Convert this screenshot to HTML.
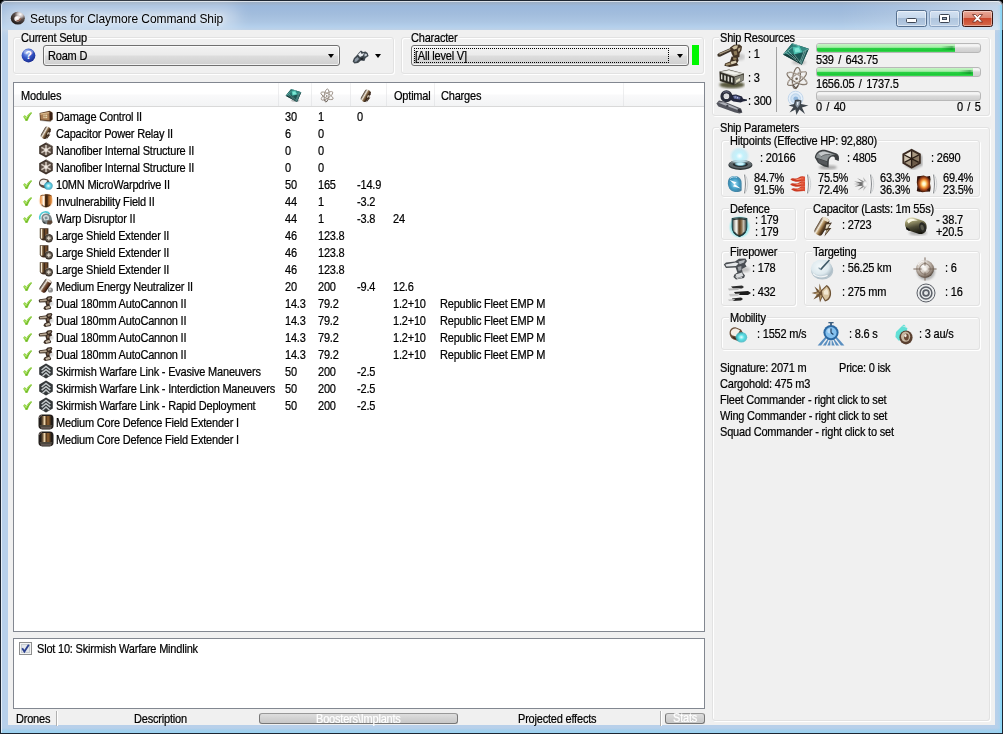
<!DOCTYPE html>
<html><head><meta charset="utf-8"><title>Setups for Claymore Command Ship</title>
<style>
html,body{margin:0;padding:0;background:#000;}
body{width:1003px;height:734px;overflow:hidden;position:relative;font-family:"Liberation Sans",sans-serif;font-size:11px;letter-spacing:-0.2px;color:#000;-webkit-text-stroke:0.2px;}
.a{position:absolute;}
.t{position:absolute;white-space:nowrap;line-height:13px;height:13px;transform:scaleY(1.08);transform-origin:0 10.5px;}
#win{left:0;top:0;width:1003px;height:734px;box-shadow:inset 0 0 0 1px #1d2531;border-radius:6px 6px 0 0;
 background:linear-gradient(180deg,#8fa3bb 0,#9db1c9 3px,#9bb8dc 6px,#a2bddd 14px,#acc6e3 22px,#b4d0ec 27px,#bfd2e7 30px,#b8d0ea 34px,#b8d0ea 728px,#a6cfec 730px,#98d2f2 733px);overflow:hidden;}
#glow{left:2px;top:6px;width:236px;height:22px;border-radius:12px;background:rgba(255,255,255,.42);filter:blur(8px);}
#rglow{left:840px;top:1px;width:163px;height:29px;background:linear-gradient(90deg,rgba(255,255,255,0),rgba(255,255,255,.18) 50%,rgba(255,255,255,.42));}
#redge{left:997px;top:5px;width:5px;height:728px;background:linear-gradient(90deg,rgba(140,214,246,0) 0,rgba(140,214,246,.25) 50%,rgba(140,214,246,1) 75%,rgba(140,214,246,1) 100%);}
#hl{left:1px;top:1px;width:1001px;height:732px;border:1px solid rgba(255,255,255,.65);border-right-color:transparent;border-bottom-color:transparent;border-radius:5px 5px 0 0;box-sizing:border-box;}
#client{left:8px;top:30px;width:987px;height:695px;background:#f0f0f0;}
#title{-webkit-text-stroke:0;left:30px;top:12px;font-size:12px;letter-spacing:-0.07px;line-height:15px;height:15px;color:#000;text-shadow:0 0 5px rgba(255,255,255,.9),0 0 9px rgba(255,255,255,.8);}
.gb{position:absolute;border:1px solid #e2e2e2;border-radius:3px;box-shadow:inset 1px 1px 0 #fff,1px 1px 0 #fff;box-sizing:border-box;}
.gl{position:absolute;background:#f0f0f0;padding:0 1px;line-height:13px;height:13px;white-space:nowrap;}
.gl span{display:inline-block;transform:scaleY(1.08);transform-origin:0 10.5px;}
.combo{position:absolute;box-sizing:border-box;border:1px solid #707070;border-radius:3px;background:linear-gradient(180deg,#f2f2f2 0,#ebebeb 48%,#dddddd 52%,#cfcfcf 100%);box-shadow:inset 0 0 0 1px rgba(255,255,255,.7);}
.arr{position:absolute;width:0;height:0;border-left:3.5px solid transparent;border-right:3.5px solid transparent;border-top:4px solid #000;}
#list{left:5px;top:52px;width:692px;height:550px;background:#fff;border:1px solid #828790;box-sizing:border-box;}
#hdr{left:0;top:0;width:690px;height:24px;background:linear-gradient(180deg,#ffffff 0,#ffffff 48%,#f9f9fa 52%,#f3f4f5 100%);border-bottom:1px solid #d9d9d9;box-sizing:border-box;}
.sep{position:absolute;top:0;width:1px;height:23px;background:linear-gradient(180deg,#f2f2f3,#e6e7e9);}
#box2{left:5px;top:608px;width:692px;height:71px;background:#fff;border:1px solid #828790;box-sizing:border-box;}
.pb{position:absolute;box-sizing:border-box;height:10px;border:1px solid #b8b8b8;border-radius:3px;background:linear-gradient(180deg,#f0f0f0 0,#f6f6f6 25%,#dadada 50%,#cfcfcf 100%);overflow:hidden;}
.pf{position:absolute;left:0;top:0;height:100%;background:linear-gradient(90deg,rgba(0,110,25,0) calc(100% - 14px),rgba(0,110,25,.45) calc(100% - 3px),rgba(0,110,25,.1) 100%) 0 45%/100% 55% no-repeat,linear-gradient(180deg,#c6f6c6 0,#a6eea8 42%,#2bd045 52%,#1cc936 85%,#48d85e 100%);}
</style></head><body>
<div id="win" class="a">
<div id="glow" class="a"></div><div id="rglow" class="a"></div><div id="redge" class="a"></div><div id="hl" class="a"></div>

<svg class="a" style="left:10px;top:10px" width="16" height="16" viewBox="0 0 16 16"><defs><radialGradient id="gApp" cx=".68" cy=".2" r=".8"><stop offset="0" stop-color="#ffffff"/><stop offset=".25" stop-color="#c9c0c0"/><stop offset=".5" stop-color="#5a4e4a"/><stop offset="1" stop-color="#241e1c"/></radialGradient></defs>
<ellipse cx="7.8" cy="8.2" rx="7" ry="6.4" fill="url(#gApp)"/><ellipse cx="7.4" cy="8.8" rx="3.1" ry="2.7" fill="#f1e8e8"/><path d="M6.4 11.4 C8.6 11.8 10.8 10.6 11.4 8.4 L9.8 8 C9.4 9.6 8 10.4 6.4 10.2 Z" fill="#8e5e4c"/><ellipse cx="6.8" cy="8" rx="1.3" ry="1" fill="#fff"/></svg>
<div id="title" class="t">Setups for Claymore Command Ship</div>
<div class="a" style="left:896px;top:10px;width:31px;height:17px;box-sizing:border-box;border:1px solid #556f8e;border-radius:2.5px;background:linear-gradient(180deg,#d6e4f4 0,#c6d8ec 46%,#a6bdd8 50%,#b6cbe2 100%);box-shadow:inset 0 0 0 1px rgba(255,255,255,.5)"></div>
<div class="a" style="left:906px;top:18px;width:11px;height:5px;box-sizing:border-box;background:#fff;border:1px solid #3d4654;border-radius:1.5px"></div>
<div class="a" style="left:929px;top:10px;width:31px;height:17px;box-sizing:border-box;border:1px solid #8aa2c0;border-radius:2.5px;background:linear-gradient(180deg,#d3e1f2 0,#c6d7ea 46%,#b0c6de 50%,#bdd0e6 100%);box-shadow:inset 0 0 0 1px rgba(255,255,255,.4)"></div>
<div class="a" style="left:939px;top:14px;width:11px;height:9px;box-sizing:border-box;background:#fff;border:1px solid #3d4654;border-radius:1.5px"></div>
<div class="a" style="left:942px;top:17px;width:5px;height:3px;box-sizing:border-box;background:#9aa6b8;border:1px solid #3d4654"></div>
<div class="a" style="left:962px;top:10px;width:31px;height:17px;box-sizing:border-box;border:1px solid #3c1612;border-radius:2.5px;background:linear-gradient(180deg,#eaa999 0,#dc8672 46%,#cb472c 50%,#d46a4c 100%);box-shadow:inset 0 0 0 1px rgba(255,255,255,.4)"></div>
<svg class="a" style="left:972px;top:14px" width="11" height="8.6" viewBox="0 0 13 10" preserveAspectRatio="none"><path d="M.6 .6 L4.2 .6 L6.5 3 L8.8 .6 L12.4 .6 L8.6 5 L12.4 9.4 L8.8 9.4 L6.5 7 L4.2 9.4 L.6 9.4 L4.4 5 Z" fill="#fff" stroke="#6a241a" stroke-width=".9"/></svg>

<div id="client" class="a">
<div class="gb" style="left:5px;top:7px;width:381px;height:37px"></div>
<div class="gl" style="left:12px;top:2px"><span>Current Setup</span></div>
<div class="gb" style="left:393px;top:7px;width:303px;height:37px"></div>
<div class="gl" style="left:402px;top:2px"><span>Character</span></div>
<div class="gb" style="left:704px;top:7px;width:278px;height:79px"></div>
<div class="gl" style="left:711px;top:2px"><span>Ship Resources</span></div>
<div class="gb" style="left:704px;top:97px;width:278px;height:594px"></div>
<div class="gl" style="left:711px;top:92px"><span>Ship Parameters</span></div>
<svg class="a" style="left:13px;top:18px" width="15" height="15" viewBox="0 0 17 17"><defs><radialGradient id="gHelp" cx=".4" cy=".3" r=".75"><stop offset="0" stop-color="#9db4f2"/><stop offset=".5" stop-color="#3558c8"/><stop offset="1" stop-color="#16268a"/></radialGradient></defs>
<circle cx="8.5" cy="8.5" r="7.8" fill="url(#gHelp)"/><ellipse cx="8.5" cy="4.6" rx="5.5" ry="3" fill="#fff" opacity=".28"/>
<text x="8.5" y="13" text-anchor="middle" font-family="Liberation Sans" font-weight="bold" font-size="12.5" fill="#fff" letter-spacing="0">?</text></svg>
<div class="combo" style="left:35px;top:15px;width:297px;height:21px"></div>
<div class="t " style="left:40px;top:20px;">Roam D</div>
<div class="arr" style="left:320px;top:24px"></div>
<svg class="a" style="left:344px;top:19px" width="18" height="16" viewBox="0 0 18 16"><defs><filter id="u1"><feGaussianBlur stdDeviation=".35"/></filter></defs><g filter="url(#u1)"><path d="M.6 12.6 L2 9 L5 6 L7 3.4 L9 1.4 L11 3 L13.6 2.4 L15.6 4 L16.6 7 L13.6 9 L12.4 12 L9 11.6 L6 14 L2.4 14.6 Z" fill="#3e464e"/><path d="M6 5.4 L8.6 3 L9.6 5 L12 4 L11 6.6 L8 8 Z" fill="#e8ecf0"/><path d="M12.6 4.4 L15 5 L14.6 7 L12.4 7.6 Z" fill="#c4ccd4"/><path d="M3 10 L5.6 8 L7 10 L4.6 12.6 L2.4 13 Z" fill="#8c98a4"/><path d="M8 9.6 L11 8.6 L11.4 10.6 L9 11 Z" fill="#1a2026"/></g></svg>
<div class="arr" style="left:367px;top:24px"></div>
<div class="combo" style="left:403px;top:15px;width:278px;height:21px"></div>
<div class="a" style="left:406px;top:18px;width:255px;height:15px;border:1px dotted #000;box-sizing:border-box"></div>
<div class="t " style="left:407px;top:20px;">[All level V]</div>
<div class="arr" style="left:669px;top:24px"></div>
<div class="a" style="left:684px;top:15px;width:7px;height:20px;background:#00f800"></div>
<div id="list" class="a"><div id="hdr" class="a">
<div class="sep" style="left:264px"></div>
<div class="sep" style="left:297px"></div>
<div class="sep" style="left:336px"></div>
<div class="sep" style="left:372px"></div>
<div class="sep" style="left:420px"></div>
<div class="sep" style="left:609px"></div>
<div class="t " style="left:7px;top:7px;">Modules</div>
<svg class="a" style="left:271px;top:5px" width="17" height="15" viewBox="0 0 28 24"><defs><filter id="b6"><feGaussianBlur stdDeviation=".35"/></filter><filter id="b6s"><feGaussianBlur stdDeviation="1"/></filter></defs>
<ellipse cx="17" cy="20.4" rx="7" ry="2.2" fill="#9a9a9a" opacity=".6" filter="url(#b6s)"/>
<g filter="url(#b6)"><path d="M1 12.4 L10.2 1.2 L26.8 6.8 L19.8 22.8 Z" fill="#143c3c"/>
<path d="M1 12.4 L10.2 1.2 L10.4 5.2 L12 12.4 Z" fill="#277670"/>
<path d="M10.2 1.2 L26.8 6.8 L20.8 10.2 L17.4 3.8 L10.4 5.2 Z" fill="#348a82"/>
<path d="M26.8 6.8 L19.8 22.8 L12 12.4 L20.8 10.2 Z" fill="#1d5452"/>
<path d="M1 12.4 L12 12.4 L19.8 22.8 Z" fill="#163f3e"/>
<path d="M10.4 5.2 L17.4 3.8 L20.8 10.2 L12 12.4 Z" fill="#4cc0b0"/><path d="M12.4 6.4 L16.6 5.6 L18.6 9.4 L13.4 10.6 Z" fill="#7ee6d4"/>
<g stroke="#bfeee8" stroke-width=".6" opacity=".8"><path d="M10.4 5.2 L1.4 12.2 M17.4 3.8 L10.4 1.6 M20.8 10.2 L26.4 7 M12 12.4 L19.6 22.2 M6 9 L14 17 M4 10.6 L16 19.6 M22 9.8 L18 20 M24 8.6 L19 21.4"/></g></g></svg>
<svg class="a" style="left:305px;top:5px" width="16" height="15" viewBox="0 0 26 24"><defs><filter id="b7"><feGaussianBlur stdDeviation=".3"/></filter></defs><g filter="url(#b7)"><g fill="none" stroke="#7c7066" stroke-width="1.25"><ellipse cx="13" cy="12.5" rx="11" ry="3.9" transform="rotate(28 13 12.5)"/><ellipse cx="13" cy="12.5" rx="11" ry="3.9" transform="rotate(-34 13 12.5)"/><ellipse cx="12.4" cy="12" rx="3.8" ry="10.6" transform="rotate(8 12.4 12)"/></g><g fill="none" stroke="#e4dcd2" stroke-width=".55"><ellipse cx="13.3" cy="12" rx="10.6" ry="3.5" transform="rotate(28 13.3 12)"/><ellipse cx="12.8" cy="12" rx="10.6" ry="3.5" transform="rotate(-34 12.8 12)"/></g><circle cx="12.6" cy="12.8" r="1.3" fill="#6a5e54"/><path d="M9 19 L12 22.4 L14 19.6" stroke="#5e5248" stroke-width="1.2" fill="none"/></g></svg>
<svg class="a" style="left:344px;top:5px" width="16" height="16" viewBox="0 0 16 16"><defs><linearGradient id="gC16" x1="0" x2="1"><stop offset="0" stop-color="#3a2a1c"/><stop offset=".3" stop-color="#f2eade"/><stop offset=".5" stop-color="#8a6e4c"/><stop offset=".75" stop-color="#4a3422"/><stop offset="1" stop-color="#241810"/></linearGradient><filter id="m2"><feGaussianBlur stdDeviation=".3"/></filter></defs><g filter="url(#m2)"><g transform="rotate(30 8 8)"><rect x="4.4" y="1.6" width="6.6" height="12.6" rx="2.4" fill="url(#gC16)"/></g><path d="M9 7 L13 6 L10.6 9.4 L12.4 9.4 L8.4 14.4 L9.6 10.6 L7.8 10.8 Z" fill="#3e2c1e"/><path d="M9.6 7.6 L11.8 7 L10 9.6 L9 9.8 Z" fill="#e4d8c4"/></g></svg>
<div class="t " style="left:380px;top:7px;">Optimal</div>
<div class="t " style="left:427px;top:7px;">Charges</div>
</div>
<svg class="a" style="left:9px;top:29px" width="9" height="9" viewBox="0 0 9 9"><path d="M0.1 4.7 L1.9 3.1 L3.3 5.1 C4.4 3 5.9 1.2 8.3 0 L9 1.2 C7 3.2 5.6 5.8 4.7 8.8 L2.6 9 C2 7.4 1.2 5.9 0.1 4.7 Z" fill="#84cb34"/><path d="M1.2 4.4 L3.3 6.6 C4.4 4.4 5.6 2.6 7.8 1" stroke="#cdf590" stroke-width="1" fill="none" opacity=".9"/><path d="M3.2 8.6 C3.9 6.2 5.2 3.6 8 1.4" stroke="#4a9410" stroke-width=".7" fill="none" opacity=".6"/></svg>
<svg class="a" style="left:24px;top:25px" width="16" height="16" viewBox="0 0 16 16"><defs><filter id="m1"><feGaussianBlur stdDeviation=".3"/></filter></defs><g filter="url(#m1)"><path d="M1.6 5 L11.6 2.8 L14.4 4.6 L14.6 11.6 L12.4 13.6 L2 12.4 Z" fill="#5c3e26"/><path d="M2.4 5.6 L11.4 4 L11.6 12.2 L2.8 11.4 Z" fill="#a87c52"/><path d="M2.4 5.6 L11.4 4 L11.4 5.2 L2.4 6.8 Z" fill="#d8b88c"/><rect x="5.4" y="6.6" width="3.8" height="3.6" fill="#ecd8b0"/><path d="M7 6.6 V10.2 M5.4 8.4 H9.2" stroke="#9a7448" stroke-width=".6"/><path d="M11.6 4 L14.4 4.8 L14.4 11.4 L11.8 12.2 Z" fill="#3a2416"/><path d="M3 12.6 L12 13.8 L14.6 11.8" stroke="#9c9c9c" stroke-width=".8" fill="none" opacity=".6"/></g></svg>
<div class="t " style="left:42px;top:28px;">Damage Control II</div>
<div class="t " style="left:271px;top:28px;">30</div>
<div class="t " style="left:304px;top:28px;">1</div>
<div class="t " style="left:343px;top:28px;">0</div>
<svg class="a" style="left:24px;top:42px" width="16" height="16" viewBox="0 0 16 16"><defs><linearGradient id="gC17" x1="0" x2="1"><stop offset="0" stop-color="#3a2a1c"/><stop offset=".3" stop-color="#f2eade"/><stop offset=".5" stop-color="#8a6e4c"/><stop offset=".75" stop-color="#4a3422"/><stop offset="1" stop-color="#241810"/></linearGradient><filter id="m3"><feGaussianBlur stdDeviation=".3"/></filter></defs><g filter="url(#m3)"><g transform="rotate(30 8 8)"><rect x="4.4" y="1.6" width="6.6" height="12.6" rx="2.4" fill="url(#gC17)"/></g><path d="M9 7 L13 6 L10.6 9.4 L12.4 9.4 L8.4 14.4 L9.6 10.6 L7.8 10.8 Z" fill="#3e2c1e"/><path d="M9.6 7.6 L11.8 7 L10 9.6 L9 9.8 Z" fill="#e4d8c4"/></g></svg>
<div class="t " style="left:42px;top:45px;">Capacitor Power Relay II</div>
<div class="t " style="left:271px;top:45px;">6</div>
<div class="t " style="left:304px;top:45px;">0</div>
<svg class="a" style="left:24px;top:59px" width="16" height="16" viewBox="0 0 16 16"><defs><filter id="m4"><feGaussianBlur stdDeviation=".4"/></filter></defs><g filter="url(#m4)"><path d="M8 .6 L14.8 4.2 L14.8 11.8 L8 15.4 L1.2 11.8 L1.2 4.2 Z" fill="#3e322a"/><path d="M8 2.2 L13.4 5 L13.4 11 L8 13.8 L2.6 11 L2.6 5 Z" fill="#64564c"/><g stroke="#d4cac0" stroke-width="1.5"><path d="M8 3 V13 M3.4 5.4 L12.6 10.6 M12.6 5.4 L3.4 10.6"/></g><circle cx="8" cy="8" r="1.7" fill="#f4ece4"/><path d="M8 .8 L14.6 4.4 L14.6 7" stroke="#8e8278" stroke-width=".8" fill="none"/></g></svg>
<div class="t " style="left:42px;top:62px;">Nanofiber Internal Structure II</div>
<div class="t " style="left:271px;top:62px;">0</div>
<div class="t " style="left:304px;top:62px;">0</div>
<svg class="a" style="left:24px;top:76px" width="16" height="16" viewBox="0 0 16 16"><defs><filter id="m4"><feGaussianBlur stdDeviation=".4"/></filter></defs><g filter="url(#m4)"><path d="M8 .6 L14.8 4.2 L14.8 11.8 L8 15.4 L1.2 11.8 L1.2 4.2 Z" fill="#3e322a"/><path d="M8 2.2 L13.4 5 L13.4 11 L8 13.8 L2.6 11 L2.6 5 Z" fill="#64564c"/><g stroke="#d4cac0" stroke-width="1.5"><path d="M8 3 V13 M3.4 5.4 L12.6 10.6 M12.6 5.4 L3.4 10.6"/></g><circle cx="8" cy="8" r="1.7" fill="#f4ece4"/><path d="M8 .8 L14.6 4.4 L14.6 7" stroke="#8e8278" stroke-width=".8" fill="none"/></g></svg>
<div class="t " style="left:42px;top:79px;">Nanofiber Internal Structure II</div>
<div class="t " style="left:271px;top:79px;">0</div>
<div class="t " style="left:304px;top:79px;">0</div>
<svg class="a" style="left:9px;top:97px" width="9" height="9" viewBox="0 0 9 9"><path d="M0.1 4.7 L1.9 3.1 L3.3 5.1 C4.4 3 5.9 1.2 8.3 0 L9 1.2 C7 3.2 5.6 5.8 4.7 8.8 L2.6 9 C2 7.4 1.2 5.9 0.1 4.7 Z" fill="#84cb34"/><path d="M1.2 4.4 L3.3 6.6 C4.4 4.4 5.6 2.6 7.8 1" stroke="#cdf590" stroke-width="1" fill="none" opacity=".9"/><path d="M3.2 8.6 C3.9 6.2 5.2 3.6 8 1.4" stroke="#4a9410" stroke-width=".7" fill="none" opacity=".6"/></svg>
<svg class="a" style="left:24px;top:93px" width="16" height="16" viewBox="0 0 16 16"><defs><radialGradient id="gMwd" cx=".5" cy=".5" r=".55"><stop offset="0" stop-color="#e8ffff"/><stop offset=".5" stop-color="#5cd0e4"/><stop offset="1" stop-color="#2a88a8" stop-opacity=".8"/></radialGradient><filter id="m5"><feGaussianBlur stdDeviation=".35"/></filter></defs><g filter="url(#m5)"><path d="M1 6.4 C1.4 4 3.6 2.4 6 2.6 L10 3.6 L11.6 6 L7.6 12.4 L4 11.4 C1.8 10.4 .6 8.6 1 6.4 Z" fill="#5a4a40"/><path d="M2 6.4 C2.4 4.6 4 3.6 6 3.8 L9.4 4.6 L6.4 9.4 L3.6 8.8 C2.4 8.2 1.8 7.4 2 6.4 Z" fill="#f2f0ee"/><ellipse cx="10.4" cy="9.8" rx="4.4" ry="4" fill="url(#gMwd)"/></g></svg>
<div class="t " style="left:42px;top:96px;">10MN MicroWarpdrive II</div>
<div class="t " style="left:271px;top:96px;">50</div>
<div class="t " style="left:304px;top:96px;">165</div>
<div class="t " style="left:343px;top:96px;">-14.9</div>
<svg class="a" style="left:9px;top:114px" width="9" height="9" viewBox="0 0 9 9"><path d="M0.1 4.7 L1.9 3.1 L3.3 5.1 C4.4 3 5.9 1.2 8.3 0 L9 1.2 C7 3.2 5.6 5.8 4.7 8.8 L2.6 9 C2 7.4 1.2 5.9 0.1 4.7 Z" fill="#84cb34"/><path d="M1.2 4.4 L3.3 6.6 C4.4 4.4 5.6 2.6 7.8 1" stroke="#cdf590" stroke-width="1" fill="none" opacity=".9"/><path d="M3.2 8.6 C3.9 6.2 5.2 3.6 8 1.4" stroke="#4a9410" stroke-width=".7" fill="none" opacity=".6"/></svg>
<svg class="a" style="left:24px;top:110px" width="16" height="16" viewBox="0 0 16 16"><defs><linearGradient id="gInv" x1="0" x2="1"><stop offset="0" stop-color="#e88a3c"/><stop offset=".16" stop-color="#f6c08c"/><stop offset=".28" stop-color="#fff8ee"/><stop offset=".38" stop-color="#e8c29a"/><stop offset=".46" stop-color="#46280f"/><stop offset=".6" stop-color="#3a2210"/><stop offset=".7" stop-color="#8a5424"/><stop offset=".86" stop-color="#c87a34"/><stop offset="1" stop-color="#e08a3c"/></linearGradient><radialGradient id="gInvH" cx=".5" cy=".5" r=".5"><stop offset=".6" stop-color="#f6a050" stop-opacity=".8"/><stop offset="1" stop-color="#f6a050" stop-opacity="0"/></radialGradient><filter id="m6"><feGaussianBlur stdDeviation=".3"/></filter></defs><ellipse cx="8" cy="7.8" rx="7.8" ry="7.6" fill="url(#gInvH)"/><g filter="url(#m6)"><path d="M2.2 3 C2.6 1.6 5 1.2 8 1.2 C11 1.2 13.4 1.6 13.8 3 V8.6 C13.8 11.8 11.2 13.6 8 14.2 C4.8 13.6 2.2 11.8 2.2 8.6 Z" fill="url(#gInv)"/><path d="M3.6 11.6 C4.8 13 6.4 13.7 8 13.9 C9.6 13.7 11.2 13 12.4 11.6" stroke="#2a180c" stroke-width="1.2" fill="none" opacity=".6"/><path d="M2.6 2.8 C4 2 12 2 13.4 2.8" stroke="#5a3216" stroke-width=".9" fill="none" opacity=".8"/></g></svg>
<div class="t " style="left:42px;top:113px;">Invulnerability Field II</div>
<div class="t " style="left:271px;top:113px;">44</div>
<div class="t " style="left:304px;top:113px;">1</div>
<div class="t " style="left:343px;top:113px;">-3.2</div>
<svg class="a" style="left:9px;top:131px" width="9" height="9" viewBox="0 0 9 9"><path d="M0.1 4.7 L1.9 3.1 L3.3 5.1 C4.4 3 5.9 1.2 8.3 0 L9 1.2 C7 3.2 5.6 5.8 4.7 8.8 L2.6 9 C2 7.4 1.2 5.9 0.1 4.7 Z" fill="#84cb34"/><path d="M1.2 4.4 L3.3 6.6 C4.4 4.4 5.6 2.6 7.8 1" stroke="#cdf590" stroke-width="1" fill="none" opacity=".9"/><path d="M3.2 8.6 C3.9 6.2 5.2 3.6 8 1.4" stroke="#4a9410" stroke-width=".7" fill="none" opacity=".6"/></svg>
<svg class="a" style="left:24px;top:127px" width="16" height="16" viewBox="0 0 16 16"><defs><filter id="m7"><feGaussianBlur stdDeviation=".4"/></filter></defs><g filter="url(#m7)"><path d="M2 9.4 C1 6 3 2.6 6.4 2 C8.4 1.6 10.4 2.4 11.6 4" stroke="#52ccd6" stroke-width="1.7" fill="none"/><path d="M3.4 8 C3.4 5.4 5.4 3.6 8 3.6 C11 3.6 13.4 5.6 13.8 8.6 L14.4 12.6 L12.4 14.6 L7 14 C4.6 13 3.4 10.6 3.4 8 Z" fill="#7c8688"/><path d="M5 7.6 C5.2 6 6.4 5 8 5 C9.6 5 10.8 6 11 7.4 L10.6 10 L6.4 10.4 Z" fill="#d8e0e2"/><path d="M6.6 6.8 L9.4 6.6 L9.6 9 L7 9.4 Z" fill="#7e9296"/><path d="M9.6 10.6 L14 10.6 L14.4 12.8 L12.4 14.6 L9 14.2 Z" fill="#5c4434"/><path d="M4.4 11 L7.6 12.4 L7.4 14 L5 13 Z" fill="#3e4446"/></g></svg>
<div class="t " style="left:42px;top:130px;">Warp Disruptor II</div>
<div class="t " style="left:271px;top:130px;">44</div>
<div class="t " style="left:304px;top:130px;">1</div>
<div class="t " style="left:343px;top:130px;">-3.8</div>
<div class="t " style="left:379px;top:130px;">24</div>
<svg class="a" style="left:24px;top:144px" width="16" height="16" viewBox="0 0 16 16"><defs><filter id="m11"><feGaussianBlur stdDeviation=".3"/></filter></defs><g filter="url(#m11)"><path d="M1.8 1.2 H10.4 V10.2 C10.4 12 8.6 13.4 6.1 13.4 C3.6 13.4 1.8 12 1.8 10.2 Z" fill="#3e2a1a"/><rect x="2.7" y="1.8" width="1.7" height="9.8" fill="#f6ead4"/><rect x="4.4" y="1.8" width="1" height="9.6" fill="#9c7a50"/><rect x="7" y="2" width="2.2" height="8.4" fill="#6e4a2a"/><circle cx="10.8" cy="11.2" r="4.2" fill="#3a322c"/><circle cx="10.8" cy="11.2" r="3" fill="#6a6056"/><path d="M10.8 9.2 V13.2 M8.8 11.2 H12.8" stroke="#e4dcd0" stroke-width="1.2"/><path d="M7.6 8.6 C8.4 7.6 9.8 7 11 7.2" stroke="#a89e92" stroke-width=".7" fill="none"/></g></svg>
<div class="t " style="left:42px;top:147px;">Large Shield Extender II</div>
<div class="t " style="left:271px;top:147px;">46</div>
<div class="t " style="left:304px;top:147px;">123.8</div>
<svg class="a" style="left:24px;top:161px" width="16" height="16" viewBox="0 0 16 16"><defs><filter id="m11"><feGaussianBlur stdDeviation=".3"/></filter></defs><g filter="url(#m11)"><path d="M1.8 1.2 H10.4 V10.2 C10.4 12 8.6 13.4 6.1 13.4 C3.6 13.4 1.8 12 1.8 10.2 Z" fill="#3e2a1a"/><rect x="2.7" y="1.8" width="1.7" height="9.8" fill="#f6ead4"/><rect x="4.4" y="1.8" width="1" height="9.6" fill="#9c7a50"/><rect x="7" y="2" width="2.2" height="8.4" fill="#6e4a2a"/><circle cx="10.8" cy="11.2" r="4.2" fill="#3a322c"/><circle cx="10.8" cy="11.2" r="3" fill="#6a6056"/><path d="M10.8 9.2 V13.2 M8.8 11.2 H12.8" stroke="#e4dcd0" stroke-width="1.2"/><path d="M7.6 8.6 C8.4 7.6 9.8 7 11 7.2" stroke="#a89e92" stroke-width=".7" fill="none"/></g></svg>
<div class="t " style="left:42px;top:164px;">Large Shield Extender II</div>
<div class="t " style="left:271px;top:164px;">46</div>
<div class="t " style="left:304px;top:164px;">123.8</div>
<svg class="a" style="left:24px;top:178px" width="16" height="16" viewBox="0 0 16 16"><defs><filter id="m11"><feGaussianBlur stdDeviation=".3"/></filter></defs><g filter="url(#m11)"><path d="M1.8 1.2 H10.4 V10.2 C10.4 12 8.6 13.4 6.1 13.4 C3.6 13.4 1.8 12 1.8 10.2 Z" fill="#3e2a1a"/><rect x="2.7" y="1.8" width="1.7" height="9.8" fill="#f6ead4"/><rect x="4.4" y="1.8" width="1" height="9.6" fill="#9c7a50"/><rect x="7" y="2" width="2.2" height="8.4" fill="#6e4a2a"/><circle cx="10.8" cy="11.2" r="4.2" fill="#3a322c"/><circle cx="10.8" cy="11.2" r="3" fill="#6a6056"/><path d="M10.8 9.2 V13.2 M8.8 11.2 H12.8" stroke="#e4dcd0" stroke-width="1.2"/><path d="M7.6 8.6 C8.4 7.6 9.8 7 11 7.2" stroke="#a89e92" stroke-width=".7" fill="none"/></g></svg>
<div class="t " style="left:42px;top:181px;">Large Shield Extender II</div>
<div class="t " style="left:271px;top:181px;">46</div>
<div class="t " style="left:304px;top:181px;">123.8</div>
<svg class="a" style="left:9px;top:199px" width="9" height="9" viewBox="0 0 9 9"><path d="M0.1 4.7 L1.9 3.1 L3.3 5.1 C4.4 3 5.9 1.2 8.3 0 L9 1.2 C7 3.2 5.6 5.8 4.7 8.8 L2.6 9 C2 7.4 1.2 5.9 0.1 4.7 Z" fill="#84cb34"/><path d="M1.2 4.4 L3.3 6.6 C4.4 4.4 5.6 2.6 7.8 1" stroke="#cdf590" stroke-width="1" fill="none" opacity=".9"/><path d="M3.2 8.6 C3.9 6.2 5.2 3.6 8 1.4" stroke="#4a9410" stroke-width=".7" fill="none" opacity=".6"/></svg>
<svg class="a" style="left:24px;top:195px" width="16" height="16" viewBox="0 0 16 16"><defs><linearGradient id="gNt" x1="0" x2="1"><stop offset="0" stop-color="#2e2018"/><stop offset=".3" stop-color="#efe6dc"/><stop offset=".5" stop-color="#7a5a42"/><stop offset=".75" stop-color="#5a2e1a"/><stop offset="1" stop-color="#20140c"/></linearGradient><filter id="m10"><feGaussianBlur stdDeviation=".35"/></filter></defs><g filter="url(#m10)"><g transform="rotate(34 7.5 8)"><rect x="3.6" y=".8" width="7.4" height="14" rx="2.6" fill="url(#gNt)"/><ellipse cx="7.3" cy="2" rx="2.8" ry="1.1" fill="#f4eee6"/></g><circle cx="12.4" cy="12" r="2.6" fill="#8e8e8e"/><circle cx="11.8" cy="11.4" r="1.1" fill="#d4d4d4"/></g></svg>
<div class="t " style="left:42px;top:198px;">Medium Energy Neutralizer II</div>
<div class="t " style="left:271px;top:198px;">20</div>
<div class="t " style="left:304px;top:198px;">200</div>
<div class="t " style="left:343px;top:198px;">-9.4</div>
<div class="t " style="left:379px;top:198px;">12.6</div>
<svg class="a" style="left:9px;top:216px" width="9" height="9" viewBox="0 0 9 9"><path d="M0.1 4.7 L1.9 3.1 L3.3 5.1 C4.4 3 5.9 1.2 8.3 0 L9 1.2 C7 3.2 5.6 5.8 4.7 8.8 L2.6 9 C2 7.4 1.2 5.9 0.1 4.7 Z" fill="#84cb34"/><path d="M1.2 4.4 L3.3 6.6 C4.4 4.4 5.6 2.6 7.8 1" stroke="#cdf590" stroke-width="1" fill="none" opacity=".9"/><path d="M3.2 8.6 C3.9 6.2 5.2 3.6 8 1.4" stroke="#4a9410" stroke-width=".7" fill="none" opacity=".6"/></svg>
<svg class="a" style="left:24px;top:212px" width="16" height="16" viewBox="0 0 16 16"><defs><filter id="m8"><feGaussianBlur stdDeviation=".35"/></filter><filter id="m8s"><feGaussianBlur stdDeviation=".8"/></filter></defs><ellipse cx="12" cy="8.6" rx="3.6" ry="1.6" fill="#a8a8a8" opacity=".7" filter="url(#m8s)"/><g filter="url(#m8)"><path d="M.6 5.4 L1.6 4.2 L7.6 3.4 L9.6 1.4 L13.4 1 L14.4 2.6 L13.4 4.6 L14.2 6.4 L11.4 7.8 L11.8 10.4 L13.2 12.4 L12.6 14 L7 15 L5.4 13.4 L6.4 11.6 L8.4 10.4 L7.4 7.2 L1.4 7.4 Z" fill="#3a2c22"/><path d="M1.8 5 L7.8 4.2 L9.4 5 L7.8 6.2 L2 6.4 Z" fill="#b8a894"/><path d="M9.6 3 L13 2 L12.4 4 L10.2 4.8 Z" fill="#9c8a74"/><path d="M8.8 6.6 L10.8 6 L11 8.6 L9.4 9.2 Z" fill="#7a6450"/><path d="M7.4 12 L11.4 10.8 L12.2 13 L8 14 Z" fill="#c4b6a2"/></g></svg>
<div class="t " style="left:42px;top:215px;">Dual 180mm AutoCannon II</div>
<div class="t " style="left:271px;top:215px;">14.3</div>
<div class="t " style="left:304px;top:215px;">79.2</div>
<div class="t " style="left:379px;top:215px;">1.2+10</div>
<div class="t " style="left:426px;top:215px;">Republic Fleet EMP M</div>
<svg class="a" style="left:9px;top:233px" width="9" height="9" viewBox="0 0 9 9"><path d="M0.1 4.7 L1.9 3.1 L3.3 5.1 C4.4 3 5.9 1.2 8.3 0 L9 1.2 C7 3.2 5.6 5.8 4.7 8.8 L2.6 9 C2 7.4 1.2 5.9 0.1 4.7 Z" fill="#84cb34"/><path d="M1.2 4.4 L3.3 6.6 C4.4 4.4 5.6 2.6 7.8 1" stroke="#cdf590" stroke-width="1" fill="none" opacity=".9"/><path d="M3.2 8.6 C3.9 6.2 5.2 3.6 8 1.4" stroke="#4a9410" stroke-width=".7" fill="none" opacity=".6"/></svg>
<svg class="a" style="left:24px;top:229px" width="16" height="16" viewBox="0 0 16 16"><defs><filter id="m8"><feGaussianBlur stdDeviation=".35"/></filter><filter id="m8s"><feGaussianBlur stdDeviation=".8"/></filter></defs><ellipse cx="12" cy="8.6" rx="3.6" ry="1.6" fill="#a8a8a8" opacity=".7" filter="url(#m8s)"/><g filter="url(#m8)"><path d="M.6 5.4 L1.6 4.2 L7.6 3.4 L9.6 1.4 L13.4 1 L14.4 2.6 L13.4 4.6 L14.2 6.4 L11.4 7.8 L11.8 10.4 L13.2 12.4 L12.6 14 L7 15 L5.4 13.4 L6.4 11.6 L8.4 10.4 L7.4 7.2 L1.4 7.4 Z" fill="#3a2c22"/><path d="M1.8 5 L7.8 4.2 L9.4 5 L7.8 6.2 L2 6.4 Z" fill="#b8a894"/><path d="M9.6 3 L13 2 L12.4 4 L10.2 4.8 Z" fill="#9c8a74"/><path d="M8.8 6.6 L10.8 6 L11 8.6 L9.4 9.2 Z" fill="#7a6450"/><path d="M7.4 12 L11.4 10.8 L12.2 13 L8 14 Z" fill="#c4b6a2"/></g></svg>
<div class="t " style="left:42px;top:232px;">Dual 180mm AutoCannon II</div>
<div class="t " style="left:271px;top:232px;">14.3</div>
<div class="t " style="left:304px;top:232px;">79.2</div>
<div class="t " style="left:379px;top:232px;">1.2+10</div>
<div class="t " style="left:426px;top:232px;">Republic Fleet EMP M</div>
<svg class="a" style="left:9px;top:250px" width="9" height="9" viewBox="0 0 9 9"><path d="M0.1 4.7 L1.9 3.1 L3.3 5.1 C4.4 3 5.9 1.2 8.3 0 L9 1.2 C7 3.2 5.6 5.8 4.7 8.8 L2.6 9 C2 7.4 1.2 5.9 0.1 4.7 Z" fill="#84cb34"/><path d="M1.2 4.4 L3.3 6.6 C4.4 4.4 5.6 2.6 7.8 1" stroke="#cdf590" stroke-width="1" fill="none" opacity=".9"/><path d="M3.2 8.6 C3.9 6.2 5.2 3.6 8 1.4" stroke="#4a9410" stroke-width=".7" fill="none" opacity=".6"/></svg>
<svg class="a" style="left:24px;top:246px" width="16" height="16" viewBox="0 0 16 16"><defs><filter id="m8"><feGaussianBlur stdDeviation=".35"/></filter><filter id="m8s"><feGaussianBlur stdDeviation=".8"/></filter></defs><ellipse cx="12" cy="8.6" rx="3.6" ry="1.6" fill="#a8a8a8" opacity=".7" filter="url(#m8s)"/><g filter="url(#m8)"><path d="M.6 5.4 L1.6 4.2 L7.6 3.4 L9.6 1.4 L13.4 1 L14.4 2.6 L13.4 4.6 L14.2 6.4 L11.4 7.8 L11.8 10.4 L13.2 12.4 L12.6 14 L7 15 L5.4 13.4 L6.4 11.6 L8.4 10.4 L7.4 7.2 L1.4 7.4 Z" fill="#3a2c22"/><path d="M1.8 5 L7.8 4.2 L9.4 5 L7.8 6.2 L2 6.4 Z" fill="#b8a894"/><path d="M9.6 3 L13 2 L12.4 4 L10.2 4.8 Z" fill="#9c8a74"/><path d="M8.8 6.6 L10.8 6 L11 8.6 L9.4 9.2 Z" fill="#7a6450"/><path d="M7.4 12 L11.4 10.8 L12.2 13 L8 14 Z" fill="#c4b6a2"/></g></svg>
<div class="t " style="left:42px;top:249px;">Dual 180mm AutoCannon II</div>
<div class="t " style="left:271px;top:249px;">14.3</div>
<div class="t " style="left:304px;top:249px;">79.2</div>
<div class="t " style="left:379px;top:249px;">1.2+10</div>
<div class="t " style="left:426px;top:249px;">Republic Fleet EMP M</div>
<svg class="a" style="left:9px;top:267px" width="9" height="9" viewBox="0 0 9 9"><path d="M0.1 4.7 L1.9 3.1 L3.3 5.1 C4.4 3 5.9 1.2 8.3 0 L9 1.2 C7 3.2 5.6 5.8 4.7 8.8 L2.6 9 C2 7.4 1.2 5.9 0.1 4.7 Z" fill="#84cb34"/><path d="M1.2 4.4 L3.3 6.6 C4.4 4.4 5.6 2.6 7.8 1" stroke="#cdf590" stroke-width="1" fill="none" opacity=".9"/><path d="M3.2 8.6 C3.9 6.2 5.2 3.6 8 1.4" stroke="#4a9410" stroke-width=".7" fill="none" opacity=".6"/></svg>
<svg class="a" style="left:24px;top:263px" width="16" height="16" viewBox="0 0 16 16"><defs><filter id="m8"><feGaussianBlur stdDeviation=".35"/></filter><filter id="m8s"><feGaussianBlur stdDeviation=".8"/></filter></defs><ellipse cx="12" cy="8.6" rx="3.6" ry="1.6" fill="#a8a8a8" opacity=".7" filter="url(#m8s)"/><g filter="url(#m8)"><path d="M.6 5.4 L1.6 4.2 L7.6 3.4 L9.6 1.4 L13.4 1 L14.4 2.6 L13.4 4.6 L14.2 6.4 L11.4 7.8 L11.8 10.4 L13.2 12.4 L12.6 14 L7 15 L5.4 13.4 L6.4 11.6 L8.4 10.4 L7.4 7.2 L1.4 7.4 Z" fill="#3a2c22"/><path d="M1.8 5 L7.8 4.2 L9.4 5 L7.8 6.2 L2 6.4 Z" fill="#b8a894"/><path d="M9.6 3 L13 2 L12.4 4 L10.2 4.8 Z" fill="#9c8a74"/><path d="M8.8 6.6 L10.8 6 L11 8.6 L9.4 9.2 Z" fill="#7a6450"/><path d="M7.4 12 L11.4 10.8 L12.2 13 L8 14 Z" fill="#c4b6a2"/></g></svg>
<div class="t " style="left:42px;top:266px;">Dual 180mm AutoCannon II</div>
<div class="t " style="left:271px;top:266px;">14.3</div>
<div class="t " style="left:304px;top:266px;">79.2</div>
<div class="t " style="left:379px;top:266px;">1.2+10</div>
<div class="t " style="left:426px;top:266px;">Republic Fleet EMP M</div>
<svg class="a" style="left:9px;top:284px" width="9" height="9" viewBox="0 0 9 9"><path d="M0.1 4.7 L1.9 3.1 L3.3 5.1 C4.4 3 5.9 1.2 8.3 0 L9 1.2 C7 3.2 5.6 5.8 4.7 8.8 L2.6 9 C2 7.4 1.2 5.9 0.1 4.7 Z" fill="#84cb34"/><path d="M1.2 4.4 L3.3 6.6 C4.4 4.4 5.6 2.6 7.8 1" stroke="#cdf590" stroke-width="1" fill="none" opacity=".9"/><path d="M3.2 8.6 C3.9 6.2 5.2 3.6 8 1.4" stroke="#4a9410" stroke-width=".7" fill="none" opacity=".6"/></svg>
<svg class="a" style="left:24px;top:280px" width="16" height="16" viewBox="0 0 16 16"><path d="M8 .6 L14.8 4.4 L14.8 11.6 L8 15.4 L1.2 11.6 L1.2 4.4 Z" fill="#34383a"/><g fill="none" stroke="#c3c9cb" stroke-width="1.5"><path d="M3.6 7 L8 3.4 L12.4 7"/><path d="M3.6 10.2 L8 6.6 L12.4 10.2"/><path d="M4.6 13 L8 10 L11.4 13"/></g></svg>
<div class="t " style="left:42px;top:283px;">Skirmish Warfare Link - Evasive Maneuvers</div>
<div class="t " style="left:271px;top:283px;">50</div>
<div class="t " style="left:304px;top:283px;">200</div>
<div class="t " style="left:343px;top:283px;">-2.5</div>
<svg class="a" style="left:9px;top:301px" width="9" height="9" viewBox="0 0 9 9"><path d="M0.1 4.7 L1.9 3.1 L3.3 5.1 C4.4 3 5.9 1.2 8.3 0 L9 1.2 C7 3.2 5.6 5.8 4.7 8.8 L2.6 9 C2 7.4 1.2 5.9 0.1 4.7 Z" fill="#84cb34"/><path d="M1.2 4.4 L3.3 6.6 C4.4 4.4 5.6 2.6 7.8 1" stroke="#cdf590" stroke-width="1" fill="none" opacity=".9"/><path d="M3.2 8.6 C3.9 6.2 5.2 3.6 8 1.4" stroke="#4a9410" stroke-width=".7" fill="none" opacity=".6"/></svg>
<svg class="a" style="left:24px;top:297px" width="16" height="16" viewBox="0 0 16 16"><path d="M8 .6 L14.8 4.4 L14.8 11.6 L8 15.4 L1.2 11.6 L1.2 4.4 Z" fill="#34383a"/><g fill="none" stroke="#c3c9cb" stroke-width="1.5"><path d="M3.6 7 L8 3.4 L12.4 7"/><path d="M3.6 10.2 L8 6.6 L12.4 10.2"/><path d="M4.6 13 L8 10 L11.4 13"/></g></svg>
<div class="t " style="left:42px;top:300px;">Skirmish Warfare Link - Interdiction Maneuvers</div>
<div class="t " style="left:271px;top:300px;">50</div>
<div class="t " style="left:304px;top:300px;">200</div>
<div class="t " style="left:343px;top:300px;">-2.5</div>
<svg class="a" style="left:9px;top:318px" width="9" height="9" viewBox="0 0 9 9"><path d="M0.1 4.7 L1.9 3.1 L3.3 5.1 C4.4 3 5.9 1.2 8.3 0 L9 1.2 C7 3.2 5.6 5.8 4.7 8.8 L2.6 9 C2 7.4 1.2 5.9 0.1 4.7 Z" fill="#84cb34"/><path d="M1.2 4.4 L3.3 6.6 C4.4 4.4 5.6 2.6 7.8 1" stroke="#cdf590" stroke-width="1" fill="none" opacity=".9"/><path d="M3.2 8.6 C3.9 6.2 5.2 3.6 8 1.4" stroke="#4a9410" stroke-width=".7" fill="none" opacity=".6"/></svg>
<svg class="a" style="left:24px;top:314px" width="16" height="16" viewBox="0 0 16 16"><path d="M8 .6 L14.8 4.4 L14.8 11.6 L8 15.4 L1.2 11.6 L1.2 4.4 Z" fill="#34383a"/><g fill="none" stroke="#c3c9cb" stroke-width="1.5"><path d="M3.6 7 L8 3.4 L12.4 7"/><path d="M3.6 10.2 L8 6.6 L12.4 10.2"/><path d="M4.6 13 L8 10 L11.4 13"/></g></svg>
<div class="t " style="left:42px;top:317px;">Skirmish Warfare Link - Rapid Deployment</div>
<div class="t " style="left:271px;top:317px;">50</div>
<div class="t " style="left:304px;top:317px;">200</div>
<div class="t " style="left:343px;top:317px;">-2.5</div>
<svg class="a" style="left:24px;top:331px" width="16" height="16" viewBox="0 0 16 16"><defs><linearGradient id="gCd" x1="0" x2="1"><stop offset="0" stop-color="#1e1814"/><stop offset=".22" stop-color="#7a6040"/><stop offset=".34" stop-color="#f0dcb8"/><stop offset=".42" stop-color="#d8b888"/><stop offset=".5" stop-color="#4a2e16"/><stop offset=".68" stop-color="#946432"/><stop offset=".86" stop-color="#5a3c20"/><stop offset="1" stop-color="#1e1814"/></linearGradient><filter id="m9"><feGaussianBlur stdDeviation=".35"/></filter></defs><g filter="url(#m9)"><rect x=".5" y=".6" width="15" height="14.8" rx="3.8" fill="#241e1a"/><path d="M2.6 2 H13.4 V11 H2.6 Z" fill="url(#gCd)"/><path d="M1.6 11 H14.4 L13 14.4 H3 Z" fill="#4e463e"/><path d="M3 14 H13" stroke="#8a8078" stroke-width=".7"/><path d="M1.4 4 C1.6 2.4 2.6 1.4 4 1.2" stroke="#8a8078" stroke-width=".8" fill="none"/></g></svg>
<div class="t " style="left:42px;top:334px;">Medium Core Defence Field Extender I</div>
<svg class="a" style="left:24px;top:348px" width="16" height="16" viewBox="0 0 16 16"><defs><linearGradient id="gCd" x1="0" x2="1"><stop offset="0" stop-color="#1e1814"/><stop offset=".22" stop-color="#7a6040"/><stop offset=".34" stop-color="#f0dcb8"/><stop offset=".42" stop-color="#d8b888"/><stop offset=".5" stop-color="#4a2e16"/><stop offset=".68" stop-color="#946432"/><stop offset=".86" stop-color="#5a3c20"/><stop offset="1" stop-color="#1e1814"/></linearGradient><filter id="m9"><feGaussianBlur stdDeviation=".35"/></filter></defs><g filter="url(#m9)"><rect x=".5" y=".6" width="15" height="14.8" rx="3.8" fill="#241e1a"/><path d="M2.6 2 H13.4 V11 H2.6 Z" fill="url(#gCd)"/><path d="M1.6 11 H14.4 L13 14.4 H3 Z" fill="#4e463e"/><path d="M3 14 H13" stroke="#8a8078" stroke-width=".7"/><path d="M1.4 4 C1.6 2.4 2.6 1.4 4 1.2" stroke="#8a8078" stroke-width=".8" fill="none"/></g></svg>
<div class="t " style="left:42px;top:351px;">Medium Core Defence Field Extender I</div>
</div>
<div id="box2" class="a">
<svg class="a" style="left:5px;top:3px" width="13" height="13" viewBox="0 0 13 13"><rect x=".5" y=".5" width="12" height="12" fill="#f4f4f4" stroke="#8e8f8f"/><rect x="2.5" y="2.5" width="8" height="8" fill="#e4e7ea" stroke="#c6ccd2"/><path d="M3.2 6.2 L5.4 9.6 L9.8 2.8" stroke="#2a3f8f" stroke-width="1.8" fill="none"/></svg>
<div class="t " style="left:23px;top:4px;">Slot 10: Skirmish Warfare Mindlink</div>
</div>
<div class="t " style="left:8px;top:683px;">Drones</div>
<div class="a" style="left:48px;top:681px;width:1px;height:15px;background:#b0b0b0"></div>
<div class="a" style="left:49px;top:681px;width:1px;height:15px;background:#fff"></div>
<div class="t " style="left:126px;top:683px;">Description</div>
<div class="a" style="left:251px;top:683px;width:199px;height:11px;box-sizing:border-box;border:1px solid #777;border-top-color:#999;border-radius:3px;background:linear-gradient(180deg,#dedede,#d2d2d2 50%,#c8c8c8)"></div>
<div class="t " style="left:308px;top:682.5px;color:#fff;">Boosters\Implants</div>
<div class="t " style="left:510px;top:683px;">Projected effects</div>
<div class="a" style="left:652px;top:681px;width:1px;height:15px;background:#b0b0b0"></div>
<div class="a" style="left:653px;top:681px;width:1px;height:15px;background:#fff"></div>
<div class="a" style="left:657px;top:683px;width:40px;height:11px;box-sizing:border-box;border:1px solid #777;border-top-color:#999;border-radius:3px;background:linear-gradient(180deg,#dedede,#d2d2d2 50%,#c8c8c8)"></div>
<div class="t " style="left:665px;top:682px;color:#fff;">Stats</div>
<svg class="a" style="left:709px;top:14px" width="28" height="24" viewBox="0 0 28 24"><defs><filter id="b1"><feGaussianBlur stdDeviation=".45"/></filter><filter id="b2"><feGaussianBlur stdDeviation="1.2"/></filter></defs>
<ellipse cx="23" cy="13" rx="5" ry="3.4" fill="#bdbdbd" opacity=".75" filter="url(#b2)"/>
<g filter="url(#b1)"><path d="M.3 10.6 L2 9 L13.6 4 L15.4 6.8 L3 12.8 L.8 12.6 Z" fill="#3a3026"/><path d="M2 9.6 L13.4 4.8 L14 5.8 L2.6 10.8 Z" fill="#a89a80"/>
<path d="M13 3.4 L17 .8 L22.6 .6 L25 2.4 L24.4 6.6 L22.6 9.6 L22.4 13 L19.6 14 L16.6 13.4 L14.6 9.6 Z" fill="#453626"/>
<path d="M15 3.4 L18 1.6 L21 1.6 L20 4.4 L17 5.6 Z" fill="#cdbf9f"/><path d="M20.8 4.8 L23.6 3.2 L23 6.6 L21.4 8 Z" fill="#b5a585"/><path d="M16.4 7.6 L19.6 6.8 L20.4 10.6 L17.6 11.6 Z" fill="#8d7a58"/>
<path d="M14.6 12.6 L20.6 13 L21.6 16.6 L20 19.4 L21.6 21.2 L12.6 23 L7.4 21.8 L8 19.4 L13 17.4 Z" fill="#3c2e20"/><path d="M13.6 17.8 L19 16.4 L19.6 18.8 L14.4 20.4 Z" fill="#d8ccb2"/><path d="M8.4 20 L13.4 18.6 L13.8 20.8 L9.4 21.8 Z" fill="#a3906c"/><path d="M16 13.6 L19.4 13.8 L19.6 15.6 L16.4 16 Z" fill="#93805c"/></g></svg>
<div class="t " style="left:740px;top:17.5px;">: 1</div>
<svg class="a" style="left:709px;top:38px" width="28" height="22" viewBox="0 0 28 22"><defs><filter id="b3"><feGaussianBlur stdDeviation=".4"/></filter><filter id="b4"><feGaussianBlur stdDeviation="1"/></filter></defs>
<ellipse cx="15" cy="16.8" rx="12.6" ry="3.4" fill="#4a4a2a" opacity=".9" filter="url(#b4)"/>
<g filter="url(#b3)"><path d="M2.4 3.6 L12 1.6 L27 5.4 L26.6 12.6 L17 17.6 L2.8 13 Z" fill="#3a362c"/>
<path d="M2.8 3.8 L12 2 L26.6 5.6 L17.4 8.4 Z" fill="#d4d4cc"/><path d="M6 4 L12 2.8 L22 5.4 L17 6.8 Z" fill="#f2f2ee"/>
<path d="M3 5 L17 9.2 L17 16.8 L3.2 12.4 Z" fill="#2c2a24"/>
<g fill="#dcdcd4"><path d="M4 6.2 L5.4 6.6 L5.4 11.6 L4 11.2 Z"/><path d="M7.2 7.2 L8.8 7.7 L8.8 12.7 L7.2 12.2 Z"/><path d="M10.6 8.2 L12.2 8.7 L12.2 13.7 L10.6 13.2 Z"/><path d="M14 9.2 L15.6 9.7 L15.6 14.7 L14 14.2 Z"/></g>
<path d="M17.6 9.2 L26.4 6.4 L26.2 12.2 L17.6 16.6 Z" fill="#86867a"/><path d="M19 12.4 L23 10 L23 12.6 L19 14.8 Z" fill="#e4e0c8"/></g></svg>
<div class="t " style="left:740px;top:41.5px;">: 3</div>
<svg class="a" style="left:708px;top:60px" width="32" height="24" viewBox="0 0 32 24"><defs><filter id="b5"><feGaussianBlur stdDeviation=".4"/></filter></defs>
<g filter="url(#b5)"><path d="M.4 13.6 L3 10.6 L8 11.4 L25 18.6 L26.4 22.6 L23.6 23.6 L19 22.6 L2.4 16.6 Z" fill="#54565e"/><path d="M2 12.6 L7.4 12.2 L24.4 19.4 L24.6 21 L8 15 Z" fill="#aeb0b8"/><path d="M21.4 18.4 L25 19.4 L25.6 22.4 L22.4 22 Z" fill="#34363c"/><path d="M10 15.4 L12 14.6 L12.6 16.6 L10.6 17.2 Z" fill="#3e4048"/>
<circle cx="10.4" cy="6.2" r="4.4" fill="none" stroke="#2c2e3a" stroke-width="3.2"/><circle cx="10.4" cy="6.2" r="2.5" fill="#dcdcde"/><path d="M7 3 C8.6 1.4 11.6 1.2 13.4 2.6" stroke="#6a6e84" stroke-width="1" fill="none"/>
<path d="M14.6 5 L20 4.4 L26 6.6 L27 8.8 L31 9.6 L31 10.8 L27 11.4 L24.6 12.6 L17.4 11.6 L14 9.4 Z" fill="#23263a"/><path d="M17 6 L20 5.6 L24.6 7.4 L24 9.6 L18 8.8 Z" fill="#5a6496"/><path d="M18.6 6.6 L19.8 6.5 L19.8 7.6 L18.6 7.6 Z M21 7 L22.2 7.3 L22 8.4 L20.8 8.2 Z" fill="#c9cdea"/></g></svg>
<div class="t " style="left:740px;top:65px;">: 300</div>
<div class="a" style="left:768px;top:17px;width:1px;height:65px;background:#a0a0a0"></div>
<svg class="a" style="left:774px;top:12px" width="28" height="24" viewBox="0 0 28 24"><defs><filter id="b6"><feGaussianBlur stdDeviation=".35"/></filter><filter id="b6s"><feGaussianBlur stdDeviation="1"/></filter></defs>
<ellipse cx="17" cy="20.4" rx="7" ry="2.2" fill="#9a9a9a" opacity=".6" filter="url(#b6s)"/>
<g filter="url(#b6)"><path d="M1 12.4 L10.2 1.2 L26.8 6.8 L19.8 22.8 Z" fill="#143c3c"/>
<path d="M1 12.4 L10.2 1.2 L10.4 5.2 L12 12.4 Z" fill="#277670"/>
<path d="M10.2 1.2 L26.8 6.8 L20.8 10.2 L17.4 3.8 L10.4 5.2 Z" fill="#348a82"/>
<path d="M26.8 6.8 L19.8 22.8 L12 12.4 L20.8 10.2 Z" fill="#1d5452"/>
<path d="M1 12.4 L12 12.4 L19.8 22.8 Z" fill="#163f3e"/>
<path d="M10.4 5.2 L17.4 3.8 L20.8 10.2 L12 12.4 Z" fill="#4cc0b0"/><path d="M12.4 6.4 L16.6 5.6 L18.6 9.4 L13.4 10.6 Z" fill="#7ee6d4"/>
<g stroke="#bfeee8" stroke-width=".6" opacity=".8"><path d="M10.4 5.2 L1.4 12.2 M17.4 3.8 L10.4 1.6 M20.8 10.2 L26.4 7 M12 12.4 L19.6 22.2 M6 9 L14 17 M4 10.6 L16 19.6 M22 9.8 L18 20 M24 8.6 L19 21.4"/></g></g></svg>
<svg class="a" style="left:776px;top:36px" width="26" height="24" viewBox="0 0 26 24"><defs><filter id="b7"><feGaussianBlur stdDeviation=".3"/></filter></defs><g filter="url(#b7)"><g fill="none" stroke="#7c7066" stroke-width="1.25"><ellipse cx="13" cy="12.5" rx="11" ry="3.9" transform="rotate(28 13 12.5)"/><ellipse cx="13" cy="12.5" rx="11" ry="3.9" transform="rotate(-34 13 12.5)"/><ellipse cx="12.4" cy="12" rx="3.8" ry="10.6" transform="rotate(8 12.4 12)"/></g><g fill="none" stroke="#e4dcd2" stroke-width=".55"><ellipse cx="13.3" cy="12" rx="10.6" ry="3.5" transform="rotate(28 13.3 12)"/><ellipse cx="12.8" cy="12" rx="10.6" ry="3.5" transform="rotate(-34 12.8 12)"/></g><circle cx="12.6" cy="12.8" r="1.3" fill="#6a5e54"/><path d="M9 19 L12 22.4 L14 19.6" stroke="#5e5248" stroke-width="1.2" fill="none"/></g></svg>
<svg class="a" style="left:777px;top:60px" width="26" height="26" viewBox="0 0 26 26"><defs><filter id="b8"><feGaussianBlur stdDeviation=".4"/></filter></defs><g filter="url(#b8)"><circle cx="10.6" cy="8.6" r="7.4" fill="#e6f0fa" stroke="#c2d6ea" stroke-width="1"/><circle cx="10.6" cy="8.6" r="4.8" fill="#d0e2f4" stroke="#aecbe6" stroke-width=".8"/><circle cx="10.8" cy="8.8" r="2.4" fill="#8fb6dc"/>
<path d="M10 10 L13 9.4 L16.6 10.4 L16 14 L23.4 15.6 L17 17.4 L20 24 L14.4 19.6 L11.4 25 L10.4 19.4 L4.6 22.6 L8.4 17 L3.6 15.4 L9 14 Z" fill="#3c444c"/><path d="M11 11.4 L15 11 L14.6 15 L12.4 18 L10.4 15 Z" fill="#8c98a4"/><path d="M12 12 L13.6 12 L13.2 14.6 L12 15.4 Z" fill="#dfe8f0"/></g></svg>
<div class="pb" style="left:808px;top:13px;width:165px"><div class="pf" style="width:138px"></div></div>
<div class="t " style="left:808px;top:23.5px;word-spacing:1.6px">539 / 643.75</div>
<div class="pb" style="left:808px;top:37px;width:165px"><div class="pf" style="width:156px"></div></div>
<div class="t " style="left:808px;top:47.5px;word-spacing:1.6px">1656.05 / 1737.5</div>
<div class="pb" style="left:808px;top:61px;width:165px"></div>
<div class="t " style="left:808px;top:71px;word-spacing:1.6px">0 / 40</div>
<div class="t " style="left:949px;top:71px;word-spacing:1.6px">0 / 5</div>
<div class="gb" style="left:713px;top:110px;width:259px;height:57px"></div>
<div class="gl" style="left:721px;top:105px"><span>Hitpoints (Effective HP: 92,880)</span></div>
<svg class="a" style="left:719px;top:117px" width="28" height="24" viewBox="0 0 28 24"><defs><radialGradient id="gSh1" cx=".5" cy=".5" r=".5"><stop offset="0" stop-color="#ffffff"/><stop offset=".35" stop-color="#c4f2fc"/><stop offset=".7" stop-color="#bfeaf6" stop-opacity=".75"/><stop offset="1" stop-color="#cfeef6" stop-opacity="0"/></radialGradient><radialGradient id="gSh2" cx=".5" cy=".5" r=".5"><stop offset="0" stop-color="#ffffff"/><stop offset=".5" stop-color="#b8f2ff"/><stop offset="1" stop-color="#3a6a76"/></radialGradient><filter id="b9"><feGaussianBlur stdDeviation=".4"/></filter></defs>
<g filter="url(#b9)"><ellipse cx="13.4" cy="18" rx="12" ry="5" fill="#2e3436"/><ellipse cx="13.4" cy="17.2" rx="11.4" ry="4.4" fill="#5d6669"/><path d="M3 15.6 C8 13.2 19 13.2 24 15.6 C19 14.6 8 14.6 3 15.6 Z" fill="#aab4b8"/><ellipse cx="13.4" cy="17.4" rx="7.4" ry="2.7" fill="#252b2d"/><ellipse cx="13.4" cy="17" rx="5.6" ry="2" fill="url(#gSh2)"/></g>
<ellipse cx="12.6" cy="9" rx="10.4" ry="9.6" fill="url(#gSh1)"/></svg>
<div class="t " style="left:752px;top:121.5px;">: 20166</div>
<svg class="a" style="left:806px;top:118px" width="26" height="22" viewBox="0 0 26 22"><defs><filter id="b10"><feGaussianBlur stdDeviation=".4"/></filter><filter id="b10s"><feGaussianBlur stdDeviation="1.1"/></filter></defs><ellipse cx="14" cy="19.4" rx="9" ry="2.2" fill="#8c8c8c" opacity=".7" filter="url(#b10s)"/>
<g filter="url(#b10)"><path d="M.8 9.6 C1.6 3.6 6.6 1 12 2 L22.6 5.6 C25 6.8 25.6 10 24.6 13 L20.8 11.4 C21.2 9.4 20.4 8.4 19 8.4 C16.4 8.4 14.8 10.4 14.8 13.4 L14.6 19.4 L10 18.4 L4 15 Z" fill="#3c4042"/>
<path d="M2 9.4 C2.8 4.6 7 2.6 11.8 3.4 L21.6 6.8 C17.4 6.4 13.6 8.6 13.2 13.2 L5 10.6 Z" fill="#8c9294"/><path d="M4.6 5.6 C6.4 3.8 9.4 3.4 12 4 L17.4 5.8 C13.4 5.6 9.6 6.4 7.6 8.6 Z" fill="#c4c8ca"/><path d="M7 9 C9 6.8 12.6 6.2 16 6.6" stroke="#5a5e60" stroke-width=".8" fill="none"/><path d="M3.6 10.8 L13 13.8 L13 17.6 L5 14.8 Z" fill="#55595b"/></g></svg>
<div class="t " style="left:839px;top:121.5px;">: 4805</div>
<svg class="a" style="left:893px;top:117.5px" width="22" height="22" viewBox="0 0 22 22"><defs><filter id="b21"><feGaussianBlur stdDeviation=".4"/></filter><filter id="b21s"><feGaussianBlur stdDeviation="1"/></filter></defs><path d="M12.4 3 L21.6 8 L21.6 17.4 L12.4 22 L4 17.6 Z" fill="#6a6a6a" opacity=".5" filter="url(#b21s)"/><g filter="url(#b21)"><path d="M10.6 .8 L19.8 5.8 L19.8 15.6 L10.6 20.8 L1.4 15.6 L1.4 5.8 Z" fill="#3b2c22"/><path d="M10.6 3 L17.8 7 L17.8 14.4 L10.6 18.4 L3.4 14.4 L3.4 7 Z" fill="#a89882"/><path d="M10.6 10.8 L3.4 7 L10.6 3 Z" fill="#ece4d6"/><path d="M10.6 10.8 L3.4 7 L3.4 14.4 Z" fill="#d0c4b0"/><path d="M10.6 10.8 L17.8 14.4 L10.6 18.4 Z" fill="#6c5a48"/><path d="M10.6 10.8 L17.8 7 L17.8 14.4 Z" fill="#8a7864"/><g stroke="#2a1e16" stroke-width="1.4"><path d="M10.6 3 V18.4 M3.4 7 L17.8 14.4 M17.8 7 L3.4 14.4"/></g></g></svg>
<div class="t " style="left:923px;top:121.5px;">: 2690</div>
<svg class="a" style="left:719px;top:144px" width="22" height="20" viewBox="0 0 22 20"><defs><radialGradient id="gEm" cx=".5" cy=".5" r=".55"><stop offset="0" stop-color="#9fdcf2"/><stop offset=".6" stop-color="#3f9cc4"/><stop offset="1" stop-color="#2a6e92" stop-opacity=".85"/></radialGradient><filter id="b11"><feGaussianBlur stdDeviation=".45"/></filter></defs><g filter="url(#b11)"><path d="M1 7 C1.6 3.4 5 1.4 8.6 2 C12 2.6 14.6 5 14.6 9 L14.6 16.4 C12 18.6 6.6 18.6 3.6 16 C1.4 14 .4 10.6 1 7 Z" fill="url(#gEm)"/><path d="M2.6 6 L9.6 8.4 L7.6 10 L13.6 14.6 L5.8 12.2 L7.6 10.6 Z" fill="#fff"/><path d="M3 4.4 C5 2.6 8 2.4 10 3.4" stroke="#d8f4ff" stroke-width=".9" fill="none"/></g><path d="M17.6 .6 C18.6 7 18.6 13 17.6 19.4" stroke="#767a7e" stroke-width="1.1" fill="none"/><path d="M16.6 1 C17.4 7 17.4 13 16.6 19" stroke="#fdfdfd" stroke-width=".9" fill="none"/><path d="M19.2 2.4 C21.2 7.6 21.2 12.4 19.2 17.6" stroke="#cfd2d4" stroke-width="1" fill="none"/></svg>
<div class="t " style="left:746px;top:141.5px;">84.7%</div>
<div class="t " style="left:746px;top:153.5px;">91.5%</div>
<svg class="a" style="left:782px;top:144px" width="22" height="20" viewBox="0 0 22 20"><defs><filter id="b24"><feGaussianBlur stdDeviation=".4"/></filter></defs><g filter="url(#b24)"><g fill="#cc3a24"><path d="M.4 5.4 C3 2.6 5.6 6 8.6 3.6 C10.6 2 13 1.8 15 2.8 L15 7.4 C10.4 6.6 6.4 9.6 .4 5.4 Z"/><path d="M.2 10.4 C3 7.8 5.6 11 8.6 8.8 C10.6 7.4 13 7 15 8 L15 12.4 C10.4 11.6 6.4 14.6 .2 10.4 Z"/><path d="M1.2 15.4 C4 12.8 6.4 16 9.2 13.8 C11 12.4 13.2 12.2 15 13 L15 17.2 C10.6 16.6 7 19.4 1.2 15.4 Z"/></g><g fill="#f48a6a"><path d="M5 5.2 C8 5.4 10 3.6 13.4 3.8 L13.4 5.2 C10 5.2 8 6.8 5 5.2 Z"/><path d="M5 10.2 C8 10.4 10 8.6 13.4 8.8 L13.4 10.2 C10 10.2 8 11.8 5 10.2 Z"/><path d="M6 15 C8.6 15.2 10.4 13.8 13.4 14 L13.4 15.2 C10.6 15.2 8.6 16.4 6 15 Z"/></g><path d="M11 3 L15 2.8 V17.2 L11 16 Z" fill="#e2563a" opacity=".7"/></g><path d="M17.6 .6 C18.6 7 18.6 13 17.6 19.4" stroke="#767a7e" stroke-width="1.1" fill="none"/><path d="M16.6 1 C17.4 7 17.4 13 16.6 19" stroke="#fdfdfd" stroke-width=".9" fill="none"/><path d="M19.2 2.4 C21.2 7.6 21.2 12.4 19.2 17.6" stroke="#cfd2d4" stroke-width="1" fill="none"/></svg>
<div class="t " style="left:810px;top:141.5px;">75.5%</div>
<div class="t " style="left:810px;top:153.5px;">72.4%</div>
<svg class="a" style="left:845px;top:144px" width="22" height="20" viewBox="0 0 22 20"><defs><filter id="b12"><feGaussianBlur stdDeviation=".55"/></filter><radialGradient id="gKn" cx=".5" cy=".5" r=".5"><stop offset="0" stop-color="#fff"/><stop offset=".5" stop-color="#ececec"/><stop offset="1" stop-color="#ececec" stop-opacity="0"/></radialGradient></defs><g filter="url(#b12)"><path d="M1 7.4 L12.6 8.6 L13.6 10 L12.6 11.4 L1.6 12.6 L7 10.6 L.4 10 L7 9.4 Z" fill="#707070"/><path d="M4 4 L12.4 8 L13.4 9.4 L10 8.8 Z" fill="#8a8a8a"/><path d="M4.6 16.4 L12.4 12 L13.4 10.6 L10 11.4 Z" fill="#8a8a8a"/><path d="M10 3 L13.6 7.6 L14.4 10 L13.6 12.4 L10 17 L12 10 Z" fill="#b4b4b4"/></g><ellipse cx="12.4" cy="10" rx="3.4" ry="3.8" fill="url(#gKn)"/><path d="M17.6 .6 C18.6 7 18.6 13 17.6 19.4" stroke="#767a7e" stroke-width="1.1" fill="none"/><path d="M16.6 1 C17.4 7 17.4 13 16.6 19" stroke="#fdfdfd" stroke-width=".9" fill="none"/><path d="M19.2 2.4 C21.2 7.6 21.2 12.4 19.2 17.6" stroke="#cfd2d4" stroke-width="1" fill="none"/></svg>
<div class="t " style="left:872px;top:141.5px;">63.3%</div>
<div class="t " style="left:872px;top:153.5px;">36.3%</div>
<svg class="a" style="left:908px;top:144px" width="22" height="20" viewBox="0 0 22 20"><defs><radialGradient id="gEx" cx=".52" cy=".5" r=".52"><stop offset="0" stop-color="#ffffff"/><stop offset=".22" stop-color="#fff0b0"/><stop offset=".45" stop-color="#f49a3c"/><stop offset=".7" stop-color="#a8481c"/><stop offset="1" stop-color="#32140a"/></radialGradient><filter id="b20"><feGaussianBlur stdDeviation=".45"/></filter></defs><g filter="url(#b20)"><path d="M1.2 2.6 L4.6 2 L7.6 1.4 L10.6 2.4 L14 2 L14.4 6 L14 9.6 L14.6 13 L14 17.4 L10 17.8 L6.4 18.2 L3 17.6 L.8 17 L1.4 12.6 L.8 8.6 Z" fill="url(#gEx)"/><path d="M1.2 2.6 L4.6 2 L3 5 Z M14 2 L14.4 6 L11.6 3.4 Z M.8 17 L3.4 14.6 L4 17.8 Z M14 17.4 L11 15.6 L14.4 13.6 Z" fill="#2a1208" opacity=".8"/></g><path d="M17.6 .6 C18.6 7 18.6 13 17.6 19.4" stroke="#767a7e" stroke-width="1.1" fill="none"/><path d="M16.6 1 C17.4 7 17.4 13 16.6 19" stroke="#fdfdfd" stroke-width=".9" fill="none"/><path d="M19.2 2.4 C21.2 7.6 21.2 12.4 19.2 17.6" stroke="#cfd2d4" stroke-width="1" fill="none"/></svg>
<div class="t " style="left:935px;top:141.5px;">69.4%</div>
<div class="t " style="left:935px;top:153.5px;">23.5%</div>
<div class="gb" style="left:713px;top:178px;width:75px;height:32px"></div>
<div class="gl" style="left:721px;top:173px"><span>Defence</span></div>
<svg class="a" style="left:720px;top:184.5px" width="24" height="24" viewBox="0 0 24 24"><defs><radialGradient id="gDf" cx=".5" cy=".5" r=".5"><stop offset=".5" stop-color="#5fe0e6"/><stop offset=".8" stop-color="#8fe8ec" stop-opacity=".7"/><stop offset="1" stop-color="#bff2f4" stop-opacity="0"/></radialGradient><linearGradient id="gDf2" x1="0" x2="1"><stop offset="0" stop-color="#2e3432"/><stop offset=".2" stop-color="#d8d8d0"/><stop offset=".32" stop-color="#f6f6f0"/><stop offset=".46" stop-color="#5a3e22"/><stop offset=".6" stop-color="#7a5a34"/><stop offset=".78" stop-color="#c4c0b2"/><stop offset="1" stop-color="#2a2e2c"/></linearGradient><filter id="b13"><feGaussianBlur stdDeviation=".4"/></filter></defs><ellipse cx="11.6" cy="12" rx="11.4" ry="11.8" fill="url(#gDf)"/><g filter="url(#b13)"><path d="M4.2 3.6 C8 2.4 15 2.4 18.8 3.6 V12 C18.8 17 15.6 20 11.5 21.6 C7.4 20 4.2 17 4.2 12 Z" fill="url(#gDf2)" stroke="#1e4a4e" stroke-width="1.1"/><path d="M5 4.6 C8 3.6 15 3.6 18 4.6" stroke="#2c3a3a" stroke-width="1.4" fill="none"/><path d="M6 17 C8 19.6 10 20.6 11.5 21 C13 20.6 15 19.6 17 17" stroke="#16282a" stroke-width="1.6" fill="none" opacity=".7"/></g></svg>
<div class="t " style="left:747px;top:183.5px;">: 179</div>
<div class="t " style="left:747px;top:195.5px;">: 179</div>
<div class="gb" style="left:796px;top:178px;width:176px;height:32px"></div>
<div class="gl" style="left:804px;top:173px"><span>Capacitor (Lasts: 1m 55s)</span></div>
<svg class="a" style="left:805px;top:186px" width="20" height="22" viewBox="0 0 20 22"><defs><linearGradient id="gCp" x1="0" x2="1"><stop offset="0" stop-color="#4a341e"/><stop offset=".25" stop-color="#f4ecdc"/><stop offset=".45" stop-color="#b89868"/><stop offset=".7" stop-color="#6a4a28"/><stop offset="1" stop-color="#2e2014"/></linearGradient><filter id="b14"><feGaussianBlur stdDeviation=".4"/></filter></defs><g filter="url(#b14)"><g transform="rotate(30 9 11)"><rect x="4" y="1" width="9" height="19" rx="3.4" fill="url(#gCp)"/><ellipse cx="8.5" cy="2.6" rx="3.6" ry="1.6" fill="#e8dcc6"/></g><path d="M12.4 7.6 L19 6.6 L15.4 12 L18.4 12 L11.4 20.6 L13.4 14 L10.6 14.4 Z" fill="#4a3826"/><path d="M13.4 8.6 L17 8 L14.2 12.4 L12.4 12.8 Z" fill="#e6dac4"/><path d="M13.6 14.6 L16 13.2 L12.6 18 Z" fill="#c8b490"/></g></svg>
<div class="t " style="left:834px;top:189px;">: 2723</div>
<svg class="a" style="left:896px;top:186px" width="24" height="20" viewBox="0 0 24 20"><defs><linearGradient id="gRc" x1=".2" y1="0" x2=".5" y2="1"><stop offset="0" stop-color="#f2f0d4"/><stop offset=".25" stop-color="#a09c70"/><stop offset=".6" stop-color="#4a4834"/><stop offset="1" stop-color="#181810"/></linearGradient><filter id="b17"><feGaussianBlur stdDeviation=".45"/></filter><filter id="b17s"><feGaussianBlur stdDeviation="1"/></filter></defs><ellipse cx="14" cy="17" rx="9" ry="2.4" fill="#8a8a8a" opacity=".6" filter="url(#b17s)"/><g filter="url(#b17)"><path d="M1 7 C1.6 2.4 5.6 .4 9.6 1.4 L19.6 5 C23 7 23.6 12 21.2 15.8 C19.6 18.2 16.4 18.6 13.6 17.6 L4.6 14.4 C2 13 .6 10 1 7 Z" fill="url(#gRc)"/><ellipse cx="18.6" cy="11.4" rx="3.4" ry="5.2" transform="rotate(-18 18.6 11.4)" fill="#2c2c26"/><ellipse cx="18.2" cy="11.6" rx="1.6" ry="3" transform="rotate(-18 18.2 11.6)" fill="#5a5a4e"/><path d="M3 5 C5 2.6 8.4 2.4 11 3.4 L14 4.6 C10.6 4.4 7 5 4.6 7.4 Z" fill="#fbf9e6"/><path d="M2 11 L6 13.6 L5.4 15 L2.4 13.4 Z" fill="#0e0e0a"/></g></svg>
<div class="t " style="left:928px;top:183.5px;">- 38.7</div>
<div class="t " style="left:928px;top:195.5px;">+20.5</div>
<div class="gb" style="left:713px;top:221px;width:75px;height:55px"></div>
<div class="gl" style="left:721px;top:216px"><span>Firepower</span></div>
<svg class="a" style="left:715px;top:227.5px" width="28" height="22" viewBox="0 0 28 22"><defs><filter id="b15"><feGaussianBlur stdDeviation=".45"/></filter><filter id="b15s"><feGaussianBlur stdDeviation="1.1"/></filter></defs><ellipse cx="21" cy="11.6" rx="6" ry="2.6" fill="#b4b4b4" opacity=".8" filter="url(#b15s)"/><g filter="url(#b15)"><path d="M.8 6.6 L3 4.6 L12 3.4 L16 .8 L22.4 .6 L24 3 L22 6 L23.6 8.6 L19 11 L19.6 14.6 L22 17.4 L21 20 L13 21.6 L10.4 19 L11.4 16.4 L14.4 14.4 L12.6 9.6 L3 10 Z" fill="#4a4e52"/><path d="M2.4 6.4 L12.6 4.4 L15.6 5.6 L13 8 L3.4 8.4 Z" fill="#e6e8ea"/><path d="M15.4 3.4 L22 1.8 L21 4.6 L16.6 6.2 Z" fill="#b4b8bc"/><path d="M14.6 9 L18.4 8 L18.4 12 L15.6 13 Z" fill="#9a9ea2"/><path d="M12.6 16.6 L19 14.6 L20.4 18 L13.6 20 Z" fill="#d8dadc"/><path d="M12.4 18.4 L14 20.4 L19 19.4" stroke="#f4f4f4" stroke-width=".7" fill="none"/></g></svg>
<div class="t " style="left:744px;top:231.5px;">: 178</div>
<svg class="a" style="left:720px;top:254px" width="24" height="18" viewBox="0 0 24 18"><path d="M3 2.4 L14 1.6 L16 3 L14 4.4 L5 4.6 Z" fill="#2c2c2c"/><path d="M0 4.6 L12 4.2 L10 6 L1 6.4 Z" fill="#b9b9b9"/><path d="M6 8 L20 7 L23 9 L20 11 L8 11 Z" fill="#1c1c1c"/><path d="M1 10 L12 9.6 L10 12 L2 12.4 Z" fill="#c9c9c9"/><path d="M4 14.4 L13 13.4 L15 15 L13 16.6 L5 17 Z" fill="#232323"/><path d="M0 15.4 L7 15 L6 16.6 L1 17 Z" fill="#c4c4c4"/></svg>
<div class="t " style="left:744px;top:255.5px;">: 432</div>
<div class="gb" style="left:796px;top:221px;width:176px;height:55px"></div>
<div class="gl" style="left:804px;top:216px"><span>Targeting</span></div>
<svg class="a" style="left:802px;top:228px" width="24" height="22" viewBox="0 0 24 22"><defs><radialGradient id="gRg" cx=".42" cy=".38" r=".62"><stop offset="0" stop-color="#f4f9fb"/><stop offset=".65" stop-color="#dde9ee"/><stop offset="1" stop-color="#a9bac4"/></radialGradient><filter id="b23"><feGaussianBlur stdDeviation=".35"/></filter></defs><g filter="url(#b23)"><ellipse cx="12.2" cy="12.6" rx="11" ry="9" fill="#b6c4cc"/><ellipse cx="11.6" cy="10.8" rx="10.8" ry="9.4" fill="url(#gRg)"/><path d="M10.6 11.6 L19.4 2" stroke="#3e5866" stroke-width="1.6"/><path d="M8.6 9.6 L10.8 11.8" stroke="#7f98a6" stroke-width="1.1"/><path d="M3 15.6 C5.6 19 12 20 17.6 17.4" stroke="#ffffff" stroke-width="1.2" fill="none" opacity=".8"/></g></svg>
<div class="t " style="left:834px;top:231.5px;">: 56.25 km</div>
<svg class="a" style="left:905px;top:227px" width="24" height="24" viewBox="0 0 24 24"><defs><radialGradient id="gLk" cx=".42" cy=".36" r=".62"><stop offset="0" stop-color="#ffffff"/><stop offset=".45" stop-color="#d6cec6"/><stop offset=".8" stop-color="#9a8c80"/><stop offset="1" stop-color="#5e5046"/></radialGradient><filter id="b22"><feGaussianBlur stdDeviation=".4"/></filter><filter id="b22s"><feGaussianBlur stdDeviation="1.1"/></filter></defs><ellipse cx="13" cy="15" rx="9" ry="8" fill="#808080" opacity=".55" filter="url(#b22s)"/><g filter="url(#b22)"><circle cx="12" cy="12" r="9" fill="url(#gLk)"/><circle cx="12" cy="12" r="5.4" fill="none" stroke="#8a7a6e" stroke-width="1"/><g stroke="#7a6a5e" stroke-width="1"><path d="M12 .4 V8.6 M12 15.4 V23.6 M.4 12 H8.6 M15.4 12 H23.6"/></g><circle cx="12" cy="12" r="1.8" fill="#f8f4f0"/><path d="M5 8 C6.6 5 10 3.6 13.4 4.2" stroke="#ffffff" stroke-width="1.2" fill="none" opacity=".8"/></g></svg>
<div class="t " style="left:937px;top:231.5px;">: 6</div>
<svg class="a" style="left:803px;top:253px" width="22" height="20" viewBox="0 0 22 20"><defs><filter id="b16"><feGaussianBlur stdDeviation=".45"/></filter></defs><g filter="url(#b16)"><path d="M8.6 .6 L10.4 7 L15.6 2 C19 4 20.6 8 20 12 C19.4 15.6 17 18 14 18.6 L11.4 14 L9 19.4 L8 13.6 L2.4 16.4 L6 11.4 L.6 10 L6 8.6 L3.4 3.4 L8 7.2 Z" fill="#6e5234"/><path d="M11 8 L15.6 3.4 C18 5.4 19.2 8.4 18.6 11.6 C18.2 14.4 16.6 16.4 14.4 17 L11.6 12.4 Z" fill="#d8c4a0"/><path d="M12.6 8.6 L15.6 5.6 C17 7.4 17.6 9.6 17.2 11.8 L13 11.4 Z" fill="#f2e8d4"/><path d="M8.8 3 L10 8 L8.6 9 L7.6 8 Z M3 10 L7.4 9.2 L8 10.6 L6.6 11.4 Z M9.2 17 L8.8 12.6 L10 12 L10.8 13 Z" fill="#b89c70"/></g></svg>
<div class="t " style="left:834px;top:255.5px;">: 275 mm</div>
<svg class="a" style="left:908px;top:252.5px" width="20" height="20" viewBox="0 0 20 20"><circle cx="10" cy="10" r="8.8" fill="#e6e9ec" opacity=".5"/><g fill="none" stroke="#5c6068"><circle cx="10" cy="10" r="9" stroke-width="1"/><circle cx="10" cy="10" r="5.9" stroke-width="1.5"/><circle cx="10" cy="10" r="2.9" stroke-width="1.8"/></g><circle cx="10.6" cy="9.6" r="1" fill="#d8dce0"/></svg>
<div class="t " style="left:937px;top:255.5px;">: 16</div>
<div class="gb" style="left:713px;top:287px;width:259px;height:33px"></div>
<div class="gl" style="left:721px;top:282px"><span>Mobility</span></div>
<svg class="a" style="left:721px;top:296px" width="20" height="18" viewBox="0 0 20 18"><defs><radialGradient id="gSp" cx=".5" cy=".5" r=".55"><stop offset="0" stop-color="#e4ffff"/><stop offset=".45" stop-color="#58e0e6"/><stop offset="1" stop-color="#2aa6b4" stop-opacity=".7"/></radialGradient><filter id="b18"><feGaussianBlur stdDeviation=".45"/></filter></defs><g filter="url(#b18)"><path d="M.6 6 C1 3 4 .8 7 1.4 L12 3.4 L14 7 L9 15 L4.6 13.6 C1.6 12 .2 9 .6 6 Z" fill="#6a4e38"/><path d="M1.8 6 C2.4 3.6 4.6 2.2 7 2.6 L11 4.2 L7.4 10.6 L3.6 9.6 C2.2 8.8 1.6 7.4 1.8 6 Z" fill="#f4eee6"/><path d="M3 10.4 L7.6 12 L8.4 13.8 L4.8 12.8 Z" fill="#3a2a1e"/><ellipse cx="12.4" cy="11.2" rx="5.8" ry="5.2" fill="url(#gSp)"/></g></svg>
<div class="t " style="left:749px;top:297.5px;">: 1552 m/s</div>
<svg class="a" style="left:809px;top:292px" width="28" height="24" viewBox="0 0 28 24"><defs><filter id="b19"><feGaussianBlur stdDeviation=".4"/></filter></defs><g filter="url(#b19)"><path d="M9 14 L.6 23.6 L27.4 23.6 L19 14 Z" fill="#5a8fc0"/><g stroke="#f0f0f0" stroke-width="1.3"><path d="M10.6 16 L4.6 24 M12.6 17 L9.4 24 M14 17.4 L14 24 M15.4 17 L18.6 24 M17.4 16 L23.4 24"/></g><circle cx="14" cy="10.6" r="7.6" fill="#2c68a2"/><circle cx="14" cy="10.6" r="5.6" fill="#84c0ee"/><circle cx="12.6" cy="9" r="2.4" fill="#b8dcf8"/><path d="M14 10.8 V6.4 M14 10.8 L16.4 12.4" stroke="#173a60" stroke-width="1.2"/><rect x="13.1" y="0" width="1.8" height="3.6" fill="#3c5e7e"/><rect x="11.4" y="0" width="5.2" height="1.3" fill="#3c5e7e"/></g></svg>
<div class="t " style="left:841px;top:297.5px;">: 8.6 s</div>
<svg class="a" style="left:886px;top:294px" width="20" height="22" viewBox="0 0 20 22"><path d="M2 8 L8 2 L13.4 4 L12 10 L5 17 L1.4 13 Z" fill="#62e0d6"/><path d="M8 2 L10 .6 L12 2.4 Z" fill="#62e0d6"/><ellipse cx="12" cy="13.4" rx="6.6" ry="7" fill="#5a4030"/><ellipse cx="11.6" cy="12.6" rx="4.6" ry="5.2" fill="#c9b8a2"/><ellipse cx="12.4" cy="13" rx="2.4" ry="3.4" fill="#6a4a36"/><ellipse cx="11.4" cy="11.6" rx="1.2" ry="1.6" fill="#f2eadf"/></svg>
<div class="t " style="left:911px;top:297.5px;">: 3 au/s</div>
<div class="t " style="left:712px;top:332px;">Signature: 2071 m</div>
<div class="t " style="left:831px;top:332px;">Price: 0 isk</div>
<div class="t " style="left:712px;top:347.5px;">Cargohold: 475 m3</div>
<div class="t " style="left:712px;top:363.5px;">Fleet Commander - right click to set</div>
<div class="t " style="left:712px;top:379.5px;">Wing Commander - right click to set</div>
<div class="t " style="left:712px;top:395.5px;">Squad Commander - right click to set</div>
</div></div></body></html>
